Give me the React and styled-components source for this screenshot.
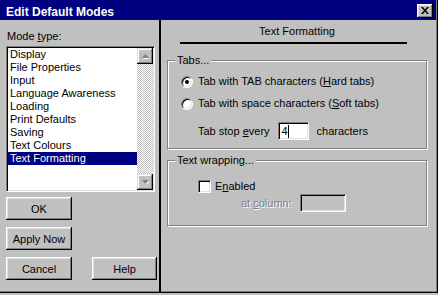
import React from 'react'
import styled, { createGlobalStyle } from 'styled-components'

const Global = createGlobalStyle`
  html, body { margin: 0; padding: 0; background: #c0c0c0; }
  body { font-family: "Liberation Sans", Arial, sans-serif; font-size: 11px; color: #000; }
  * { box-sizing: border-box; }
`

const Frame = styled.div`
  width: 438px;
  height: 293px;
  background: #c0c0c0;
  display: flex;
  flex-direction: column;
  border-right: 1px solid #000;
  border-bottom: 1px solid #000;
  box-shadow: inset -1px -1px 0 #808080;
`

const TitleBar = styled.div`
  height: 20px;
  background: #000080;
  display: flex;
  align-items: center;
  justify-content: space-between;
  padding: 1px 3px 0 6px;
  margin-right: 1px;
`

const Title = styled.span`
  color: #fff;
  font-weight: bold;
  font-size: 12px;
  line-height: 14px;
  margin-top: 3px;
`

const CloseBtn = styled.div`
  width: 16px;
  height: 14px;
  background: #c0c0c0;
  display: flex;
  align-items: center;
  justify-content: center;
  box-shadow: inset -1px -1px #000, inset 1px 1px #fff, inset -2px -2px #808080, inset 2px 2px #dfdfdf;
`

const Body = styled.div`
  flex: 1;
  display: flex;
`

const LeftPane = styled.div`
  width: 159px;
  padding-left: 6px;
  display: flex;
  flex-direction: column;
`

const Label = styled.div`
  line-height: 13px;
  margin: ${p => p.$top || 0}px 0 0 1px;
`

const ListBox = styled.div`
  margin-top: 3px;
  width: 149px;
  height: 146px;
  background: #fff;
  display: flex;
  border: 1px solid;
  border-color: #808080 #fff #fff #808080;
  box-shadow: inset 1px 1px #000, inset -1px -1px #dfdfdf;
  padding: 1px;
`

const Items = styled.div`
  flex: 1;
`

const Item = styled.div`
  line-height: 13px;
  height: 13px;
  padding-left: 2px;
  white-space: nowrap;
  background: ${p => (p.$selected ? '#000080' : 'transparent')};
  color: ${p => (p.$selected ? '#fff' : '#000')};
`

const ScrollBar = styled.div`
  width: 16px;
  display: flex;
  flex-direction: column;
`

const Track = styled.div`
  flex: 1;
  background: repeating-conic-gradient(#c0c0c0 0 25%, #fff 0 50%) 0 0 / 2px 2px;
`

const ArrowBtn = styled.div`
  width: 16px;
  height: 16px;
  background: #c0c0c0;
  display: flex;
  align-items: center;
  justify-content: center;
  box-shadow: inset -1px -1px #000, inset 1px 1px #dfdfdf, inset -2px -2px #808080, inset 2px 2px #fff;
`

const Buttons = styled.div`
  margin-top: 5px;
  display: flex;
  flex-direction: column;
  gap: 7px;
`

const ButtonRow = styled.div`
  display: flex;
  gap: 20px;
`

const Button = styled.div`
  width: ${p => p.$w || 66}px;
  height: 23px;
  display: flex;
  align-items: center;
  justify-content: center;
  font-size: 11px;
  box-shadow: inset -1px -1px #000, inset 1px 1px #fff, inset -2px -2px #808080, inset 2px 2px #dfdfdf;
`

const Divider = styled.div`
  width: 2px;
  background: #000;
`

const RightPane = styled.div`
  flex: 1;
  padding-left: 6px;
  display: flex;
  flex-direction: column;
`

const Heading = styled.div`
  margin: 5px 0 0 13px;
  width: 227px;
  line-height: 13px;
  text-align: center;
  padding: 0 0 4px 7px;
  border-bottom: 2px solid #000;
`

const Group = styled.fieldset`
  margin: ${p => p.$top}px 0 0 0;
  width: 260px;
  padding: 0 0 ${p => p.$bottom}px 0;
  border: 1px solid #808080;
  box-shadow: 1px 1px 0 #fff, inset 1px 1px 0 #fff;
  min-width: 0;
`

const Legend = styled.legend`
  margin-left: 7px;
  padding: 0 2px;
  line-height: 13px;
  background: #c0c0c0;
`

const Row = styled.div`
  display: flex;
  align-items: center;
  gap: ${p => p.$gap || 5}px;
  margin: ${p => p.$top}px 0 0 ${p => p.$left}px;
  height: ${p => p.$h || 13}px;
  line-height: 13px;
  white-space: nowrap;
`

const Radio = styled.span`
  width: 12px;
  height: 12px;
  border-radius: 50%;
  background: #fff;
  border: 1px solid;
  border-color: #808080 #fff #fff #808080;
  box-shadow: inset 1px 1px #000, inset -1px -1px #dfdfdf;
  display: flex;
  align-items: center;
  justify-content: center;
  &::after {
    content: '';
    width: 4px;
    height: 4px;
    border-radius: 50%;
    background: ${p => (p.$checked ? '#000' : 'transparent')};
  }
`

const Check = styled.span`
  width: 13px;
  height: 13px;
  background: #fff;
  border: 1px solid;
  border-color: #808080 #fff #fff #808080;
  box-shadow: inset 1px 1px #000, inset -1px -1px #dfdfdf;
`

const Field = styled.span`
  width: ${p => p.$w}px;
  height: 18px;
  background: ${p => (p.$disabled ? '#c0c0c0' : '#fff')};
  border: 1px solid;
  border-color: #808080 #fff #fff #808080;
  box-shadow: inset 1px 1px #000, inset -1px -1px #dfdfdf;
  display: flex;
  align-items: center;
  padding-left: 3px;
`

const Caret = styled.span`
  width: 1px;
  height: 13px;
  background: #000;
`

const Dim = styled.span`
  color: #808080;
  text-shadow: 1px 1px 0 #fff;
`

const U = styled.span`
  text-decoration: underline;
`

const modes = [
  'Display',
  'File Properties',
  'Input',
  'Language Awareness',
  'Loading',
  'Print Defaults',
  'Saving',
  'Text Colours',
  'Text Formatting',
]

const Arrow = ({ up }) => (
  <svg width="7" height="5" viewBox="0 0 7 5">
    <path d={up ? 'M4 2L7 5H1z' : 'M1 1h7L4.5 4.5z'} fill="#fff" />
    <path d={up ? 'M3.5 0L7 4H0z' : 'M0 0h7L3.5 4z'} fill="#808080" />
  </svg>
)

export default function App() {
  return (
    <>
      <Global />
      <Frame>
        <TitleBar>
          <Title>Edit Default Modes</Title>
          <CloseBtn>
            <svg width="8" height="7" viewBox="0 0 8 7">
              <path d="M0 0h2l2 2.5L6 0h2L5 3.5 8 7H6L4 4.5 2 7H0l3-3.5z" fill="#000" />
            </svg>
          </CloseBtn>
        </TitleBar>
        <Body>
          <LeftPane>
            <Label $top={10}>Mode <U>t</U>ype:</Label>
            <ListBox>
              <Items>
                {modes.map(m => (
                  <Item key={m} $selected={m === 'Text Formatting'}>{m}</Item>
                ))}
              </Items>
              <ScrollBar>
                <ArrowBtn><Arrow up /></ArrowBtn>
                <Track />
                <ArrowBtn><Arrow /></ArrowBtn>
              </ScrollBar>
            </ListBox>
            <Buttons>
              <Button>OK</Button>
              <Button>Apply Now</Button>
              <ButtonRow>
                <Button>Cancel</Button>
                <Button $w={65}>Help</Button>
              </ButtonRow>
            </Buttons>
          </LeftPane>
          <Divider />
          <RightPane>
            <Heading>Text Formatting</Heading>
            <Group $top={10} $bottom={8}>
              <Legend>Tabs...</Legend>
              <Row $top={8} $left={13}>
                <Radio $checked />
                <span>Tab with TAB characters (<U>H</U>ard tabs)</span>
              </Row>
              <Row $top={9} $left={13}>
                <Radio />
                <span>Tab with space characters (<U>S</U>oft tabs)</span>
              </Row>
              <Row $top={12} $left={30} $h={18} $gap={8}>
                <span>Tab stop <U>e</U>very</span>
                <Field $w={31}>4<Caret /></Field>
                <span>characters</span>
              </Row>
            </Group>
            <Group $top={5} $bottom={13}>
              <Legend>Text wrapping...</Legend>
              <Row $top={13} $left={30} $gap={4}>
                <Check />
                <span>E<U>n</U>abled</span>
              </Row>
              <Row $top={1} $left={73} $h={18} $gap={8}>
                <Dim>at <U>c</U>olumn:</Dim>
                <Field $w={46} $disabled />
              </Row>
            </Group>
          </RightPane>
        </Body>
      </Frame>
    </>
  )
}
